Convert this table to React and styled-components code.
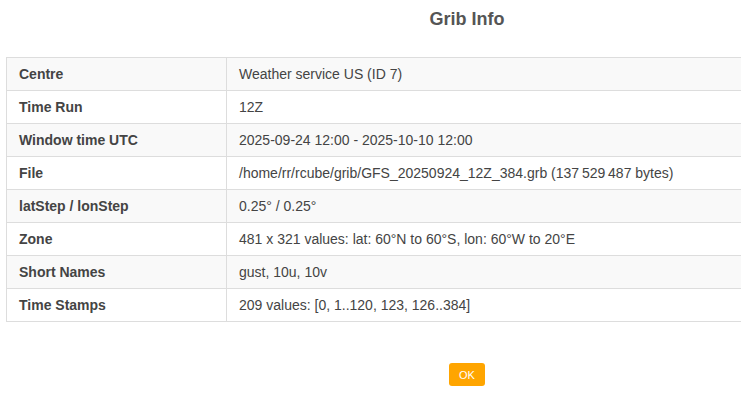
import React from 'react';
import styled, { createGlobalStyle } from 'styled-components';

const GlobalStyle = createGlobalStyle`
  html, body {
    margin: 0;
    padding: 0;
    background: #fff;
    font-family: "Liberation Sans", Arial, sans-serif;
    overflow: hidden;
  }
`;

const rows = [
  ['Centre', 'Weather service US (ID 7)'],
  ['Time Run', '12Z'],
  ['Window time UTC', '2025-09-24 12:00 - 2025-10-10 12:00'],
  ['File', '/home/rr/rcube/grib/GFS_20250924_12Z_384.grb (137\u202f529\u202f487 bytes)'],
  ['latStep / lonStep', '0.25° / 0.25°'],
  ['Zone', '481 x 321 values: lat: 60°N to 60°S, lon: 60°W to 20°E'],
  ['Short Names', 'gust, 10u, 10v'],
  ['Time Stamps', '209 values: [0, 1..120, 123, 126..384]'],
];

const Viewport = styled.div`
  width: 100vw;
  overflow: hidden;
`;

const Dialog = styled.div`
  width: 934px;
  padding: 0 6px;
  box-sizing: border-box;
  display: flex;
  flex-direction: column;
  align-items: center;
`;

const Title = styled.h2`
  margin: 0;
  padding-top: 9px;
  height: 57px;
  box-sizing: border-box;
  font-size: 18px;
  font-weight: bold;
  color: #555;
`;

const Table = styled.table`
  width: 100%;
  border-collapse: collapse;
  border: 1px solid #ddd;
  font-size: 14px;
  color: #444;
`;

const Row = styled.tr`
  height: 33px;
  background: ${p => (p.$odd ? '#f9f9f9' : '#fff')};
`;

const Cell = styled.td`
  border: 1px solid #ddd;
  padding: 0 12px;
  font-weight: ${p => (p.$label ? 'bold' : 'normal')};
  width: ${p => (p.$label ? '195px' : 'auto')};
  white-space: nowrap;
`;

const Footer = styled.div`
  padding-top: 41px;
`;

const OkButton = styled.button`
  width: 36px;
  height: 23px;
  border: none;
  border-radius: 3px;
  background: #ffa500;
  color: #fff;
  font-family: "Liberation Sans", Arial, sans-serif;
  font-size: 11px;
  padding: 0;
`;

export default function App() {
  return (
    <Viewport>
      <GlobalStyle />
      <Dialog>
        <Title>Grib Info</Title>
        <Table>
          <tbody>
            {rows.map(([k, v], i) => (
              <Row key={k} $odd={i % 2 === 0}>
                <Cell $label>{k}</Cell>
                <Cell>{v}</Cell>
              </Row>
            ))}
          </tbody>
        </Table>
        <Footer>
          <OkButton>OK</OkButton>
        </Footer>
      </Dialog>
    </Viewport>
  );
}
